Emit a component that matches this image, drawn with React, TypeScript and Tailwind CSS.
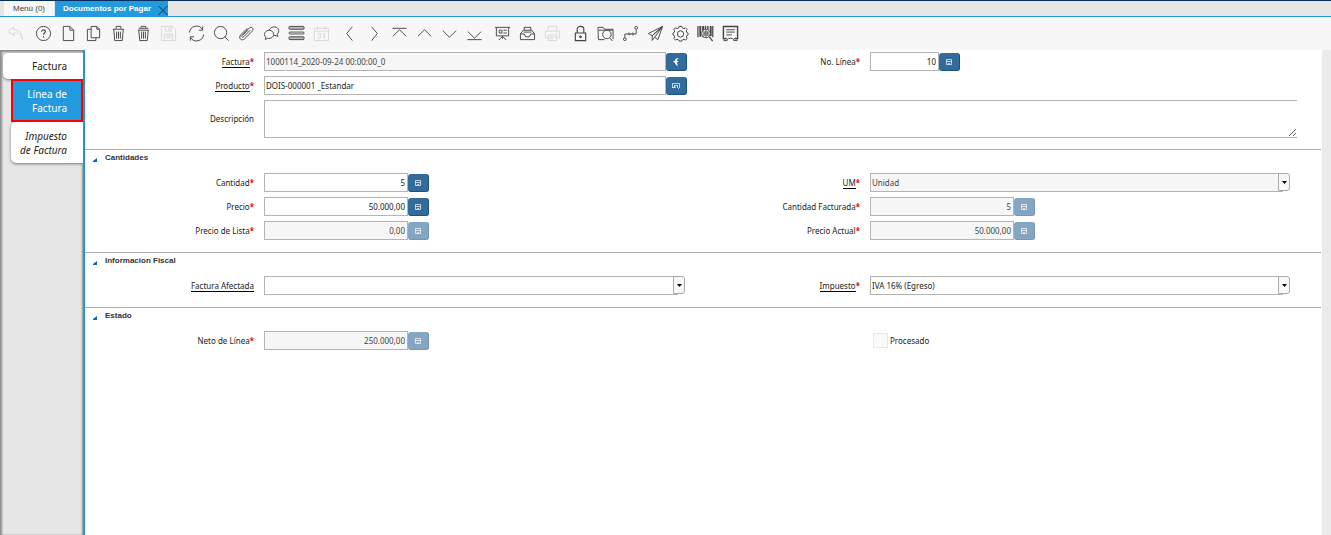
import type { ReactNode } from "react";

const icons: Record<string, ReactNode> = {
  undo: <path d="M7 2 1 7l6 4V8.500c5-.5 8 2 9.500 7C16.500 9 13 5 7 5V2" />,
  help: (
    <>
      <circle cx="9" cy="9" r="7.500" />
      <path d="M7 7.200C7 4.500 11 4.500 11 7c0 1.500-2 1.500-2 3.200M9 12v1.300" strokeWidth="1.200" />
    </>
  ),
  fresh: <path d="M3.500 1.500h7l4 4v11h-11zM10.500 1.500v4h4" />,
  copy: (
    <>
      <path d="M6.500 1.500h6l3 3v9h-9zM12.500 1.500v3h3" />
      <path d="M6.500 4.500h-4v12h9v-3" />
    </>
  ),
  trash: (
    <>
      <path d="M3 4.500h12M6.500 4V1.500h5V4M4 4.500l1 12h8l1-12" />
      <path d="M7 7v7.500M9 7v7.500M11 7v7.500" />
    </>
  ),
  trashAll: (
    <>
      <path d="M3 5.500h12M4 3.500h10M6.500 3V1.500h5V3M4 5.500l1 11h8l1-11" />
      <path d="M7 7v7.500M9 7v7.500M11 7v7.500" />
    </>
  ),
  save: (
    <>
      <path d="M1.500 1.500h12l3 3v12h-15zM5.500 1.500v5h7v-5M4.500 16.500v-7h9v7M6 11.500h6M6 13.500h6" />
      <path d="M10 2.500v3" strokeWidth="2" />
    </>
  ),
  refresh: (
    <>
      <path d="M1.500 8a7.500 7.500 0 0 1 14-3M16.500 10a7.500 7.500 0 0 1-14 3" />
      <path d="M15.500 1.500V5.500h-4M2.500 16.500v-4h4" />
    </>
  ),
  find: (
    <>
      <circle cx="8" cy="8" r="6.500" />
      <path d="m12.500 12.500 4 4" />
    </>
  ),
  attach: (
    <path d="m13 5.500-7 7c-1.300 1.300-3-.3-1.700-1.600l7.500-7.500c2.600-2.400 5.600.6 3.200 3.200l-7.800 7.900c-3.600 3.200-7.400-.7-4.200-4.200l7-7M10.500 5.500l-5 5" />
  ),
  chat: (
    <>
      <path d="M2.500 15.500 3 13C-.5 9.500 3 5.500 6.500 5.500c6.500.5 6.500 8.500-.5 8.800l-1.300-.3z" />
      <path d="M6.500 5.500C8 1.500 14 .8 16 4c1.200 2.200.6 4.300-1 5.700l.8 2.300-3-.9h-1.600" />
    </>
  ),
  grid: (
    <>
      <rect x="1" y="1.500" width="16" height="3" rx="1" fill="#bbb" />
      <rect x="1" y="7.500" width="16" height="2" rx="1" fill="#fff" />
      <rect x="1" y="12.500" width="16" height="3" rx="1" fill="#bbb" />
    </>
  ),
  calendar: (
    <>
      <path d="M1.500 3.500h15v13h-15zM1.500 6.500h15M5 1v4M13 1v4" />
      <path d="M5.500 9h3L7 11c2.500 0 2 3.500-1.500 2.800M10.500 10l1.500-1v5.500" />
    </>
  ),
  left: <path d="M12 2 6 9l6 7.500" />,
  right: <path d="m6 2 6 7-6 7.500" />,
  first: <path d="M1.500 3.500h15M2 12l7-7 7 7" />,
  up: <path d="m2 12 7-7 7 7" />,
  down: <path d="m2 6 7 7 7-7" />,
  last: <path d="M1.500 15.500h15M2 7l7 7 7-7" />,
  board: (
    <>
      <path d="M1 2.500h16M2.500 2.500v9h13v-9M9 11.500v3M9 12l-4 4M9 12l4 4" />
      <path d="M5.500 5.500h3v3h-3zM10 5.500h3.500M10 8.500h3.500" />
    </>
  ),
  inbox: (
    <>
      <path d="M1.500 9.500h4l1.500 3h4l1.500-3h4v6h-15zM1.500 9.500l3-4M16.500 9.500l-3-4" />
      <path d="M5.500 5.500v-3h7v3M4.500 5.500h9M5 7.500h8" />
    </>
  ),
  print: (
    <>
      <path d="M4.500 6.500v-5h9v5M4.500 13.500h-3v-7h15v7h-3M4.500 10.500h9v6h-9z" />
      <path d="M6 12.500h6M6 14.500h4M13 8.500h1.500" />
    </>
  ),
  lock: (
    <>
      <path d="M3.500 8.500h11v8h-11zM5.500 8V4.500c0-4 7-4 7 0v4" strokeWidth="1.200" />
      <circle cx="9" cy="12.500" r="1" fill="currentColor" />
    </>
  ),
  zoomFolder: (
    <>
      <path d="M8 15.500H1.500L1 2.500h5.500l1.500 2h9v10.500M1.500 5.500h15" />
      <circle cx="10.500" cy="10" r="4.500" fill="#f7f7f7" />
      <path d="m13.500 13.500 3 3.500" />
    </>
  ),
  workflow: (
    <>
      <path d="M3 13.500v-4h3.500M8.500 9.500h2M12.500 9.500H15V5" />
      <circle cx="3" cy="15" r="1.500" />
      <circle cx="7.500" cy="9.500" r="1" />
      <circle cx="11.500" cy="9.500" r="1" />
      <circle cx="15" cy="3" r="1.500" />
    </>
  ),
  send: <path d="M16.500 1.500 1.500 9l4 2.300zm0 0-11 9.800v5L8 13l3.500 2.500zM16.500 1.500 8 13" />,
  gear: (
    <>
      <path d="M7.500 1.500h3l.5 1.700 1.700.7 1.600-.9 1.700 1.700-.9 1.600.7 1.700 1.200.5v2l-1.200.5-.7 1.700.9 1.600-1.700 1.700-1.600-.9-1.700.7-.5 1.200h-3l-.5-1.200-1.700-.7-1.600.9L2 14.300l.9-1.600-.7-1.700-1.200-.5v-2l1.200-.5.7-1.700L2 4.700 3.700 3l1.600.9L7 3.200z" />
      <circle cx="9" cy="9.500" r="3.300" />
    </>
  ),
  barcode: (
    <>
      <path d="M1 1v12M16.700 1v12" strokeWidth="1.300" />
      <path d="M3.500 1v11.500M6.500 1v12M14.500 1v11" strokeWidth="2" />
      <path d="M9 1v4M11.500 1v4" strokeWidth="1.500" />
      <circle cx="9.500" cy="9" r="4.500" fill="#f7f7f7" />
      <path d="M7.500 6.500v5M9.500 5.500v7M11.500 6.500v5" strokeWidth="1.300" />
      <path d="m13 12.500 3.500 4.500" strokeWidth="1.300" />
    </>
  ),
  report: (
    <>
      <path d="M4 14.500H1.500v-13h15v13H14" strokeWidth="1.500" />
      <path d="M4.500 5h9M4.500 7.500h9M4.500 10.500h6" />
      <path d="M1.500 16.500h4v-1.500l-2-1.500M16.500 16.500h-4v-1.500l2-1.500M5.500 15.500c1-2 6-2 7 0" />
    </>
  ),
};

const toolbar = [
  [["undo", "Deshacer"]],
  [
    ["help", "Ayuda"],
    ["fresh", "Nuevo"],
    ["copy", "Copiar"],
    ["trash", "Eliminar"],
    ["trashAll", "Eliminar selección"],
    ["save", "Guardar"],
  ],
  [
    ["refresh", "Refrescar"],
    ["find", "Buscar"],
    ["attach", "Adjuntar"],
    ["chat", "Chat"],
    ["grid", "Cuadrícula"],
    ["calendar", "Calendario"],
  ],
  [
    ["left", "Anterior"],
    ["right", "Siguiente"],
    ["first", "Primero"],
    ["up", "Arriba"],
    ["down", "Abajo"],
    ["last", "Último"],
  ],
  [
    ["board", "Informe"],
    ["inbox", "Archivo"],
    ["print", "Imprimir"],
  ],
  [
    ["lock", "Bloquear"],
    ["zoomFolder", "Acercar"],
    ["workflow", "Flujo"],
    ["send", "Solicitudes"],
    ["gear", "Proceso"],
    ["barcode", "Producto"],
    ["report", "Exportar"],
  ],
];

const inactive = ["undo", "save", "calendar", "print"];

const Label = ({
  id,
  text,
  required = true,
  link = false,
}: {
  id: string;
  text: string;
  required?: boolean;
  link?: boolean;
}) => (
  <label htmlFor={id} className="self-center whitespace-nowrap text-right">
    <span className={link ? "border-b border-black" : ""}>{text}</span>
    {required && <span className="font-bold text-[#f00000]">*</span>}
  </label>
);

const FieldButton = ({
  label,
  kind = "calc",
  disabled = false,
}: {
  label: string;
  kind?: "calc" | "zoom" | "product";
  disabled?: boolean;
}) => (
  <button
    type="button"
    aria-label={label}
    disabled={disabled}
    className={`mt-px flex h-[18px] w-[21px] shrink-0 items-center justify-center rounded-[3px] border-r border-b text-white ${
      disabled ? "border-[#7597b4] bg-[#85a6c3]" : "border-[#1d5280] bg-[#336b9b]"
    }`}
  >
    <svg width="8" height="8" viewBox="0 0 8 8" fill="none" stroke="currentColor">
      {kind === "calc" && (
        <path d="M1.500 1.500h5v5h-5zM1.500 3.500h5M3 5.500h2" opacity="0.700" />
      )}
      {kind === "zoom" && (
        <path d="M7 0C4 0 3 1 3 3H1l2.800 3L6.500 3H5c0-1 .5-2 2-3zM3 5c.5 1.500 1.500 2.500 3 3L5 5z" fill="currentColor" stroke="none" />
      )}
      {kind === "product" && (
        <path d="M.5 6V1.500h7V6M2.500 3v3M5.500 3v2M3 3.500h2M5 5l2 2M0 5.500h4" opacity="0.700" />
      )}
    </svg>
  </button>
);

const NumberField = ({
  id,
  value,
  disabled = false,
  narrow = false,
}: {
  id: string;
  value: string;
  disabled?: boolean;
  narrow?: boolean;
}) => (
  <div className="flex">
    <input
      id={id}
      defaultValue={value}
      readOnly={disabled}
      className={`h-[19px] border border-[#b4b4b4] px-0.5 text-right ${narrow ? "w-[69px]" : "w-36"} ${
        disabled ? "bg-[#f6f6f6] text-[#444]" : "bg-white"
      }`}
    />
    <FieldButton label="Calculadora" disabled={disabled} />
  </div>
);

const Combo = ({
  id,
  value,
  disabled = false,
  className,
}: {
  id: string;
  value: string;
  disabled?: boolean;
  className: string;
}) => (
  <div className={`relative pr-[7px] ${className}`}>
    <select
      id={id}
      disabled={disabled}
      className={`block h-[19px] w-full appearance-none border border-r-0 border-[#b4b4b4] px-px opacity-100 ${
        disabled ? "bg-[#f6f6f6] text-[#444]" : "bg-white"
      }`}
    >
      <option>{value}</option>
    </select>
    <span className="pointer-events-none absolute top-0 right-0 flex h-[18px] w-3 items-center justify-center rounded-r-[3px] border border-[#aaa] bg-[#f8f8f8]">
      <svg width="5" height="3" viewBox="0 0 5 3">
        <path d="M0 0h5L2.500 3z" />
      </svg>
    </span>
  </div>
);

const fieldGrid =
  "grid grid-cols-[169fr_423fr_163fr_427fr] gap-x-2.5 gap-y-[5px] pr-6";

const Section = ({ title, children }: { title: string; children: ReactNode }) => (
  <section className="border-t border-[#aaa] pb-3">
    <h2 className="h-[23px] font-['Liberation_Sans',sans-serif] text-[8px] leading-4 font-bold text-[#333]">
      <button type="button" className="flex items-start">
        <svg className="mx-2 mt-2" width="4" height="4" viewBox="0 0 4 4">
          <path d="M4 0v4H0V3z" fill="#0a64c8" />
        </svg>
        {title}
      </button>
    </h2>
    <div className={fieldGrid}>{children}</div>
  </section>
);

const App = () => {
  return (
    <div className="flex min-h-screen flex-col bg-white font-['Noto_Sans',sans-serif] text-[8px] leading-[14px] text-[#222]">
      <header>
        <nav className="flex h-[17px] border-t border-b border-t-[#03305f] border-b-[#2199d9] bg-[#e6e6e6] font-['Liberation_Sans',sans-serif]">
          <button type="button" className="ml-1 w-[50px] bg-[#f7f7f7] text-[#444]">
            Menú (0)
          </button>
          <div className="ml-px flex w-[113px] items-center justify-between bg-[#239ade] pl-2 font-bold text-white">
            <button type="button">Documentos por Pagar</button>
            <button type="button" aria-label="Cerrar" className="self-end">
              <svg width="10" height="11" viewBox="0 0 10 11" fill="none" stroke="#12344d">
                <path d="m.5 1 9 9M9.500 1l-9 9" />
              </svg>
            </button>
          </div>
        </nav>
        <div className="flex h-[33px] items-center gap-[3px] bg-[#f7f7f7] pl-[3px]">
          {toolbar.map((group) => (
            <div key={group[0][0]} className="flex">
              {group.map(([name, label]) => (
                <button
                  key={name}
                  type="button"
                  aria-label={label}
                  disabled={inactive.includes(name)}
                  className={`flex w-[25px] justify-center ${
                    inactive.includes(name) ? "text-[#d8d8d8]" : "text-[#444]"
                  }`}
                >
                  <svg width="17" height="17" viewBox="0 0 18 18" fill="none" stroke="currentColor">
                    {icons[name]}
                  </svg>
                </button>
              ))}
            </div>
          ))}
        </div>
      </header>

      <div className="flex flex-1">
        <aside className="flex w-[85px] shrink-0 flex-col items-end border-r-2 border-[#1b98d5] bg-[#e6e6e6] pt-[3px] text-[10px] shadow-[inset_2px_2px_2px_#8c8c8c,inset_-1px_0_2px_#999]">
          <button
            type="button"
            className="h-[26px] w-20 rounded-l-[5px] bg-white pr-4 text-right shadow-[0_1px_3px_#777]"
          >
            Factura
          </button>
          <button
            type="button"
            className="relative h-[43px] w-[72px] border-2 border-[#f00] bg-[#239ade] pr-3.5 text-right text-white"
          >
            Línea de
            <br />
            Factura
          </button>
          <button
            type="button"
            className="h-[41px] w-[72px] rounded-l-[5px] bg-white pr-4 text-right italic shadow-[0_1px_3px_#777]"
          >
            Impuesto
            <br />
            de Factura
          </button>
        </aside>

        <main className="min-w-0 flex-1">
          <div className={`${fieldGrid} pt-0.5 pb-[11px]`}>
            <Label id="factura" text="Factura" link />
            <div className="flex">
              <input
                id="factura"
                readOnly
                defaultValue="1000114_2020-09-24 00:00:00_0"
                className="h-[19px] min-w-0 flex-1 border border-[#b4b4b4] bg-[#f6f6f6] px-px text-[#444]"
              />
              <FieldButton label="Abrir factura" kind="zoom" />
            </div>
            <Label id="linea" text="No. Línea" />
            <NumberField id="linea" value="10" narrow />

            <Label id="producto" text="Producto" link />
            <div className="flex">
              <input
                id="producto"
                defaultValue="DOIS-000001 _Estandar"
                className="h-[19px] min-w-0 flex-1 border border-[#b4b4b4] px-px"
              />
              <FieldButton label="Buscar producto" kind="product" />
            </div>

            <div className="col-span-4 grid grid-cols-subgrid">
              <Label id="descripcion" text="Descripción" required={false} />
              <textarea
                id="descripcion"
                className="col-span-3 block h-[38px] resize-y border border-r-0 border-[#b4b4b4]"
              />
            </div>
          </div>

          <Section title="Cantidades">
            <Label id="cantidad" text="Cantidad" />
            <NumberField id="cantidad" value="5" />
            <Label id="um" text="UM" link />
            <Combo id="um" value="Unidad" disabled className="mr-[7px]" />

            <Label id="precio" text="Precio" />
            <NumberField id="precio" value="50.000,00" />
            <Label id="facturada" text="Cantidad Facturada" />
            <NumberField id="facturada" value="5" disabled />

            <Label id="lista" text="Precio de Lista" />
            <NumberField id="lista" value="0,00" disabled />
            <Label id="actual" text="Precio Actual" />
            <NumberField id="actual" value="50.000,00" disabled />
          </Section>

          <Section title="Informacion Fiscal">
            <Label id="afectada" text="Factura Afectada" required={false} link />
            <Combo id="afectada" value="" className="mr-0.5" />
            <Label id="impuesto" text="Impuesto" link />
            <Combo id="impuesto" value="IVA 16% (Egreso)" className="mr-[7px]" />
          </Section>

          <Section title="Estado">
            <Label id="neto" text="Neto de Línea" />
            <NumberField id="neto" value="250.000,00" disabled />
            <div className="col-start-4 flex items-center pl-[3px]">
              <input
                id="procesado"
                type="checkbox"
                className="size-[15px] appearance-none border border-[#e8e8e8] bg-[#fafafa]"
              />
              <label htmlFor="procesado" className="ml-0.5">
                Procesado
              </label>
            </div>
          </Section>
        </main>
        <div className="ml-px w-[9px] bg-[#ebebeb]" />
      </div>
    </div>
  );
};

export default App;
